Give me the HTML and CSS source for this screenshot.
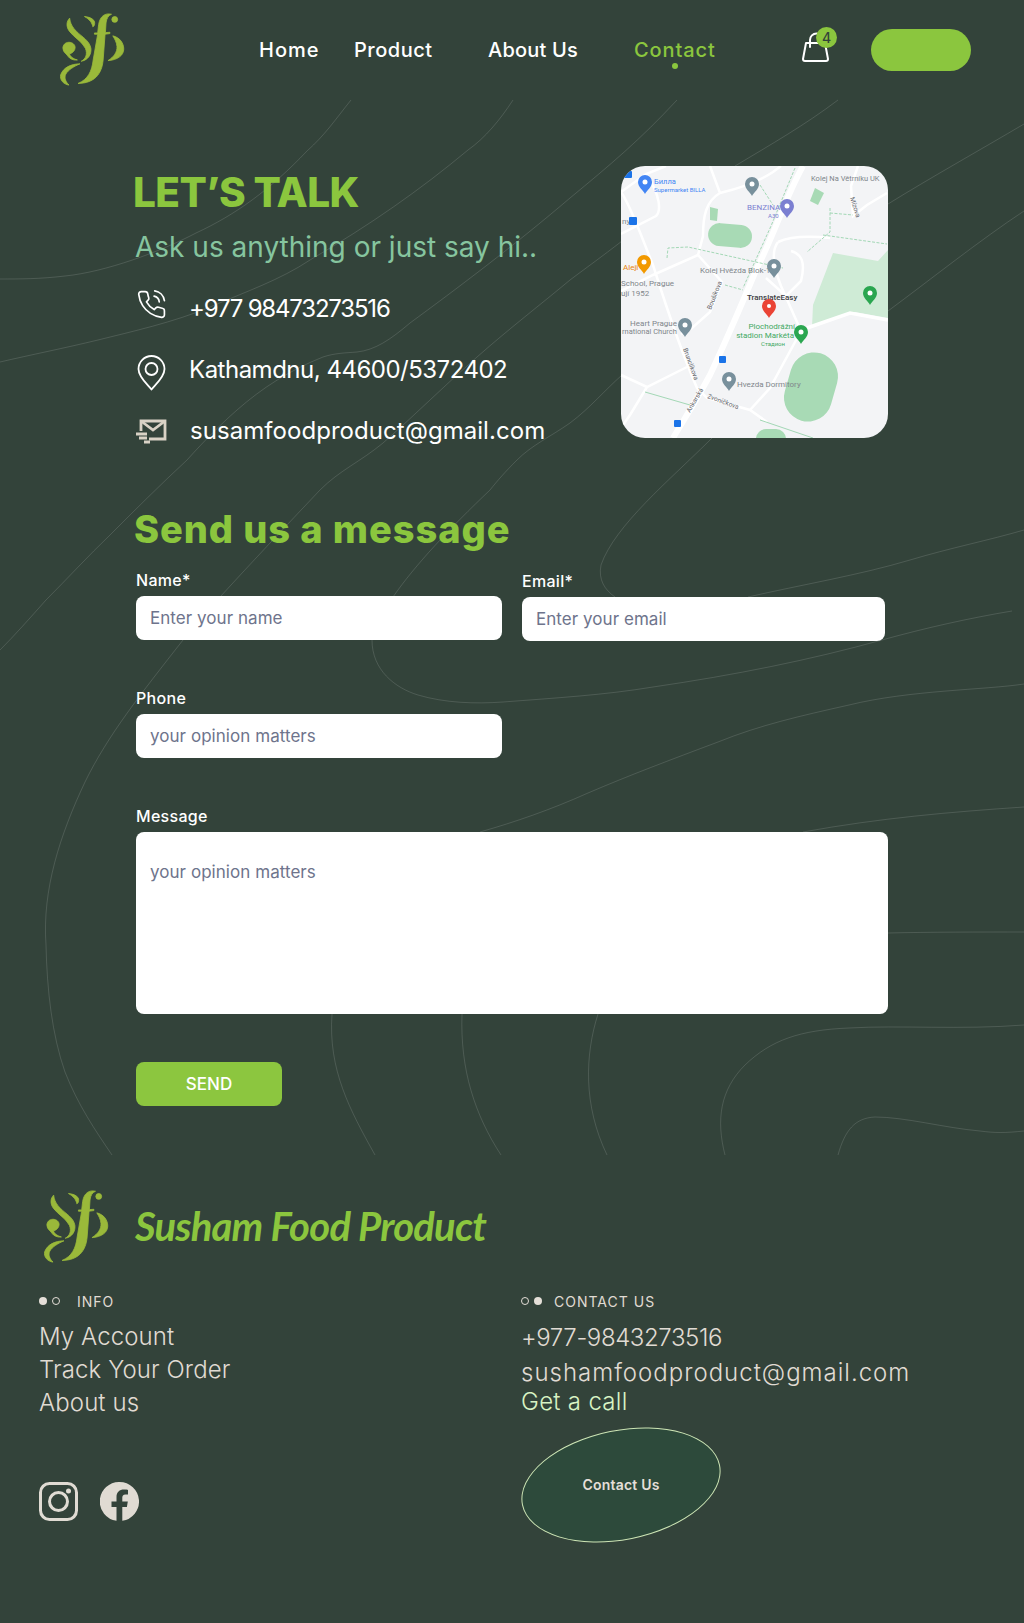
FILE: index.html
```html
<!DOCTYPE html>
<html lang="en">
<head>
<meta charset="utf-8">
<title>Contact - Susham Food Product</title>
<link rel="stylesheet" href="styles.css">
</head>
<body>
<div class="page">
  <svg class="contours" viewBox="0 0 1024 1623" width="1024" height="1623" aria-hidden="true">
    <path d="M351 100C335 120 325 135 307 151C270 190 235 215 196 233C160 252 105 272 65 276C40 279 20 279 0 279"/>
    <path d="M513 100C500 120 485 138 468 150C420 190 370 225 310 260C280 280 245 292 210 307C175 322 130 332 98 340C65 348 30 355 0 362"/>
    <path d="M677 100C640 140 610 165 570 198C515 245 455 290 410 323C390 340 375 350 357 352C345 353 335 353 323 357C290 370 262 388 237 410C220 425 205 440 187 460C160 485 135 510 110 535C88 556 68 578 46 600C30 618 15 635 0 650"/>
    <path d="M1024 124C980 150 930 178 888 204"/>
    <path d="M622 241C600 258 590 265 570 280C540 305 510 328 477 357C445 385 415 415 383 443C360 462 340 470 320 490C285 527 252 562 220 597C205 615 195 625 183 640C140 695 108 735 85 782C60 835 42 890 46 945C47 990 52 1035 65 1072C78 1105 95 1130 112 1155"/>
    <path d="M838 100C805 125 770 145 735 166"/>
    <path d="M622 375C605 390 590 408 570 423C550 437 532 445 517 460C505 472 498 480 490 490C450 528 415 565 393 597C380 615 372 625 372 640C372 670 395 688 418 695C445 703 475 704 503 702C555 698 605 695 653 687C735 675 810 660 882 640C925 628 970 618 1012 611"/>
    <path d="M1024 211C980 240 930 280 888 311"/>
    <path d="M712 438C670 480 615 525 601 565C598 580 605 590 615 597"/>
    <path d="M748 597C800 585 860 575 910 560C950 548 990 540 1024 530"/>
    <path d="M1024 684C985 690 910 690 849 705C800 716 760 725 718 742C670 760 630 775 588 793C550 810 515 822 480 832"/>
    <path d="M1024 807C950 812 880 818 803 832"/>
    <path d="M332 1014C328 1070 350 1110 375 1155"/>
    <path d="M462 1014C460 1070 475 1115 501 1155"/>
    <path d="M888 933C930 932 980 932 1024 932"/>
    <path d="M598 1014C585 1055 583 1105 607 1155"/>
    <path d="M1024 1025C960 1030 900 1025 849 1028C800 1030 771 1040 745 1065C720 1090 716 1120 725 1155"/>
    <path d="M1024 1131C1005 1133 995 1133 980 1131C945 1128 905 1117 875 1117C855 1118 845 1130 838 1155"/>
  </svg>

  <svg class="sprite" width="0" height="0" aria-hidden="true">
    <defs>
      <symbol id="sf-logo" viewBox="58 25 205 228">
        <path d="M88 40C78 50 76 66 88 82C102 100 126 112 137 134C144 152 138 166 124 174C146 170 156 152 154 134C150 110 126 98 110 82C96 68 90 56 88 40Z"/>
        <path d="M134 35C146 36 160 40 165 50C167 58 165 65 160 67C158 55 150 44 134 35Z"/>
        <path d="M86 115C74 115 67 124 67 133C67 147 80 152 84 160C88 166 100 172 112 170C98 166 88 158 88 151C98 148 105 140 105 131C105 122 96 115 86 115Z"/>
        <path d="M120 182C92 182 68 194 60 216C56 232 70 246 86 248C76 238 70 226 76 214C84 200 102 190 120 182Z"/>
        <path d="M218 28C198 23 182 34 178 60L175 86L165 86L165 90L175 90L161 170C157 205 145 230 114 243C165 242 188 214 192 170L198 90L213 88L213 84L199 85L201 55C203 40 208 32 218 28Z"/>
        <circle cx="228" cy="44" r="9"/>
        <path d="M222 95C244 100 256 118 256 136C256 155 238 170 207 172C226 160 236 145 235 128C234 115 228 105 222 95Z"/>
      </symbol>
      <path id="pin" d="M0 0C-2 -4 -7 -7 -7 -12A7 7 0 0 1 7 -12C7 -7 2 -4 0 0Z"/>
    </defs>
  </svg>

  <header class="topbar">
    <a class="logo-link" href="#"><svg class="logo" width="66" height="74"><use href="#sf-logo"/></svg></a>
    <a class="nav-link nav-home" href="#">Home</a>
    <a class="nav-link" href="#">Product</a>
    <a class="nav-link nav-about" href="#">About Us</a>
    <a class="nav-link is-active" href="#">Contact</a>
    <a class="cart" href="#">
      <svg width="28" height="30" viewBox="0 0 28 30" fill="none" stroke="#fff" stroke-width="2" stroke-linejoin="round" stroke-linecap="round">
        <path d="M4 11H23L26 27A2 2 0 0 1 24 29H3A2 2 0 0 1 1 27Z"/>
        <path d="M8 15V8A6.500 6.500 0 0 1 21 8V11"/>
      </svg>
      <span class="cart-badge">4</span>
    </a>
    <a class="pill" href="#" aria-label="Account"></a>
  </header>

  <main class="content">
    <section class="talk">
      <div class="talk-info">
        <h1 class="talk-title">LET’S TALK</h1>
        <p class="talk-sub">Ask us anything or just say hi..</p>
        <ul class="contact-list">
          <li class="contact-row">
            <svg class="icon icon-phone" width="31" height="31" viewBox="0 0 24 24" fill="none" stroke="#fff" stroke-width="1.300" stroke-linecap="round" stroke-linejoin="round">
              <path d="M22 16.920v3a2 2 0 0 1-2.180 2 19.790 19.790 0 0 1-8.630-3.070 19.500 19.500 0 0 1-6-6 19.790 19.790 0 0 1-3.070-8.670A2 2 0 0 1 4.110 2h3a2 2 0 0 1 2 1.720 12.840 12.840 0 0 0 .7 2.810 2 2 0 0 1-.45 2.110L8.090 9.910a16 16 0 0 0 6 6l1.270-1.270a2 2 0 0 1 2.110-.45 12.840 12.840 0 0 0 2.810.7A2 2 0 0 1 22 16.920z"/>
              <path d="M14 5.500A5 5 0 0 1 18 10M14.500 1.500A9 9 0 0 1 22 9"/>
            </svg>
            <span class="contact-phone">+977 98473273516</span>
          </li>
          <li class="contact-row">
            <svg class="icon icon-pin" width="29" height="36" viewBox="0 0 29 36" fill="none" stroke="#fff" stroke-width="1.800" stroke-linejoin="round">
              <path d="M14.500 34.500C10 29 1.500 22 1.500 14A13 13 0 0 1 27.500 14C27.500 22 19 29 14.500 34.500Z"/>
              <circle cx="14.500" cy="14" r="6"/>
            </svg>
            <span class="contact-address">Kathamdnu, 44600/5372402</span>
          </li>
          <li class="contact-row">
            <svg class="icon icon-mail" width="31" height="25" viewBox="0 0 31 25" fill="none" stroke="#d9d2c5" stroke-width="2.800">
              <path d="M5 12V2H29V20H13"/>
              <path d="M5 2L17 11L29 2"/>
              <path d="M0 15H11M3 19H11M8 23H14"/>
            </svg>
            <span class="contact-email">susamfoodproduct@gmail.com</span>
          </li>
        </ul>
      </div>
      <div class="map">
        <svg viewBox="0 0 267 272" width="267" height="272">
          <rect class="m-bg" width="267" height="272"/>
          <polygon class="m-pale" points="212,87 257,95 267,84 267,152 234,146 191,161 192,139"/>
          <polygon class="m-park" points="89,41 97,43 96,55 89,54"/>
          <polygon class="m-park" points="194,22 203,27 197,39 189,35"/>
          <rect class="m-park" x="87" y="58" width="44" height="23" rx="11.500" transform="rotate(5 109 70)"/>
          <rect class="m-park" x="166" y="186" width="48" height="70" rx="24" transform="rotate(16 190 221)"/>
          <rect class="m-park" x="135" y="263" width="30" height="20" rx="10"/>
          <g class="m-road">
            <path d="M0 26C10 40 22 75 32 99C45 140 62 190 76 222L86 232L129 244L146 256"/>
            <path d="M99 27L89 0M99 27C120 22 140 14 152 6L160 0M99 27C85 35 82 50 82 70L77 89L32 109L0 125"/>
            <path d="M77 89L101 116L89 146L71 162L60 168"/>
            <path d="M0 209L26 221L66 201M26 221L9 249L0 262"/>
            <path d="M157 76C150 85 152 100 160 120L180 165L149 222L129 244"/>
            <path d="M157 76C170 70 190 70 209 72M170 85C180 88 185 95 180 115L165 130L145 112"/>
            <path d="M266 27L246 39L232 50L230 20L237 0"/>
            <path d="M0 26L25 8L45 0M25 8C40 30 40 45 35 50L0 68"/>
          </g>
          <path class="m-road-wide" d="M182 0C165 30 155 65 136 102C120 140 105 175 89 209C75 235 62 255 52 272"/>
          <path class="m-road-mid" d="M186 162L229 147L267 154"/>
          <path class="m-dash" d="M174 2L150 60L122 122M139 19L152 39M209 42L209 66L186 86M209 47L232 49M202 69L266 78M46 92L47 82L67 81L162 102M104 119L122 124"/>
          <path class="m-trail" d="M24 226L69 239M139 254L192 272"/>
          <g class="m-labels">
            <text class="m-blue m-s" x="33" y="18">Билла</text>
            <text class="m-blue m-xs" x="33" y="26">Supermarket BILLA</text>
            <text class="m-purple" x="126" y="44">BENZINA</text>
            <text class="m-purple m-xs" x="147" y="52">A30</text>
            <text class="m-grey m-narrow" x="190" y="15">Kolej Na Větrníku UK</text>
            <text class="m-grey" x="79" y="107">Kolej Hvězda Blok-1</text>
            <text class="m-dark" x="126" y="134">TranslateEasy</text>
            <text class="m-green" x="174" y="163" text-anchor="end">Plochodrážní</text>
            <text class="m-green" x="173" y="172" text-anchor="end">stadion Markéta</text>
            <text class="m-green m-xs" x="164" y="180" text-anchor="end">Стадион</text>
            <text class="m-orange" x="2" y="104">Aleji</text>
            <text class="m-grey" x="0" y="120">School, Prague</text>
            <text class="m-grey" x="0" y="130">ují 1952</text>
            <text class="m-grey" x="56" y="160" text-anchor="end">Heart Prague</text>
            <text class="m-grey m-narrow" x="1" y="168">rnational Church</text>
            <text class="m-grey" x="116" y="221">Hvezda Dormitory</text>
            <text class="m-grey" x="1" y="58">ny</text>
            <text class="m-road-name" transform="translate(90 144) rotate(-68)">Boušíkova</text>
            <text class="m-road-name" transform="translate(62 183) rotate(70)">Brunclíkova</text>
            <text class="m-road-name" transform="translate(69 247) rotate(-60)">Ankarská</text>
            <text class="m-road-name" transform="translate(86 232) rotate(20)">Zvoníčkova</text>
            <text class="m-road-name" transform="translate(229 32) rotate(72)">Mízova</text>
          </g>
          <g class="m-pin-grey">
            <use href="#pin" x="131" y="30"/>
            <use href="#pin" x="153" y="112"/>
            <use href="#pin" x="64" y="171"/>
            <use href="#pin" x="108" y="225"/>
          </g>
          <use class="m-pin-blue" href="#pin" x="24" y="28"/>
          <use class="m-pin-purple" href="#pin" x="166" y="52"/>
          <use class="m-pin-orange" href="#pin" x="23" y="108"/>
          <use class="m-pin-red" href="#pin" x="148" y="152"/>
          <use class="m-pin-green" href="#pin" x="180" y="178"/>
          <use class="m-pin-green" href="#pin" x="249" y="139"/>
          <g class="m-pin-dots">
            <circle cx="131" cy="18" r="2.500"/><circle cx="166" cy="40" r="2.500"/><circle cx="24" cy="16" r="2.500"/><circle cx="23" cy="96" r="2.500"/>
            <circle cx="153" cy="100" r="2.500"/><circle cx="148" cy="140" r="2"/><circle cx="180" cy="166" r="2.500"/><circle cx="64" cy="159" r="2.500"/>
            <circle cx="108" cy="213" r="2.500"/><circle cx="249" cy="127" r="2.500"/>
          </g>
          <g class="m-stops">
            <rect x="8" y="51" width="8" height="8" rx="1"/><rect x="98" y="190" width="7" height="7" rx="1"/>
            <rect x="53" y="254" width="7" height="7" rx="1"/><rect x="1" y="5" width="10" height="7" rx="1"/>
          </g>
        </svg>
      </div>
    </section>

    <section class="message">
      <h2 class="message-title">Send us a message</h2>
      <form class="form">
        <div class="field">
          <label class="field-label" for="f-name">Name*</label>
          <input class="field-input" id="f-name" type="text" placeholder="Enter your name">
        </div>
        <div class="field field-email">
          <label class="field-label" for="f-email">Email*</label>
          <input class="field-input" id="f-email" type="email" placeholder="Enter your email">
        </div>
        <div class="field field-phone">
          <label class="field-label" for="f-phone">Phone</label>
          <input class="field-input" id="f-phone" type="text" placeholder="your opinion matters">
        </div>
        <div class="field field-message">
          <label class="field-label" for="f-message">Message</label>
          <textarea class="field-input field-area" id="f-message" placeholder="your opinion matters"></textarea>
        </div>
        <button class="send" type="button">SEND</button>
      </form>
    </section>
  </main>

  <footer class="footer">
    <div class="brand">
      <svg class="logo" width="66" height="74"><use href="#sf-logo"/></svg>
      <span class="brand-name">Susham Food Product</span>
    </div>
    <div class="footer-cols">
      <div class="footer-col">
        <h3 class="footer-head"><span class="dot dot-fill"></span><span class="dot dot-ring"></span><span class="footer-head-text">INFO</span></h3>
        <a class="footer-link" href="#">My Account</a>
        <a class="footer-link" href="#">Track Your Order</a>
        <a class="footer-link" href="#">About us</a>
        <div class="socials">
          <svg width="39" height="39" viewBox="0 0 39 39" fill="none" stroke="#e0dbd3" stroke-width="3">
            <rect x="1.500" y="1.500" width="36" height="36" rx="9"/>
            <circle cx="19.500" cy="19.500" r="9"/>
            <circle class="ig-dot" cx="29.500" cy="9" r="2.500"/>
          </svg>
          <svg width="39" height="39" viewBox="0 0 39 39">
            <path class="fb-mark" d="M19.500 0A19.500 19.500 0 0 0 16.500 38.800V25H11.500V19.500H16.500V15C16.500 10 19.500 7.500 24 7.500C26 7.500 27.500 7.800 28 7.900V12.500H25.500C23 12.500 22.300 14 22.300 15.500V19.500H27.800L26.900 25H22.300V38.800A19.500 19.500 0 0 0 19.500 0Z"/>
          </svg>
        </div>
      </div>
      <div class="footer-col">
        <h3 class="footer-head footer-head-contact"><span class="dot dot-ring"></span><span class="dot dot-fill"></span><span class="footer-head-text">CONTACT US</span></h3>
        <a class="footer-link footer-phone" href="#">+977-9843273516</a>
        <a class="footer-link footer-mail" href="#">sushamfoodproduct@gmail.com</a>
        <a class="footer-link footer-call" href="#">Get a call</a>
        <a class="blob" href="#"><span class="blob-text">Contact Us</span></a>
      </div>
    </div>
  </footer>
</div>
</body>
</html>
```

FILE: styles.css
```css
* { box-sizing: border-box; }

html, body { margin: 0; padding: 0; }

body {
  background: #33433a;
  font-family: Inter, "Noto Sans", sans-serif;
  color: #fff;
}

a { color: inherit; text-decoration: none; }

.page {
  position: relative;
  width: 1024px;
  height: 1623px;
  overflow: hidden;
  background: #33433a;
}

.contours {
  position: absolute;
  top: 0;
  left: 0;
  fill: none;
  stroke: rgba(255, 255, 255, 0.13);
  stroke-width: 1;
}

.sprite { position: absolute; }

.logo {
  display: block;
  fill: #9ab93a;
  stroke: #9ab93a;
  stroke-width: 2.500;
}

/* Top bar */
.topbar {
  position: relative;
  display: grid;
  grid-template-columns: 199px 95px 134px 146px 168px 69px 100px;
  align-items: center;
  height: 100px;
  padding-left: 60px;
}

.nav-link {
  font-size: 20px;
  font-weight: 500;
  line-height: 28px;
  letter-spacing: 0.5px;
  white-space: nowrap;
}

.nav-home { letter-spacing: 1px; }
.nav-about { letter-spacing: 0.2px; }

.nav-link.is-active {
  position: relative;
  justify-self: start;
  width: 81px;
  color: #8bc63e;
  letter-spacing: 0.9px;
}

.nav-link.is-active::after {
  content: "";
  position: absolute;
  left: 38px;
  top: 27px;
  width: 6px;
  height: 6px;
  border-radius: 50%;
  background: #8bc63e;
}

.cart {
  position: relative;
  display: block;
  width: 28px;
  height: 30px;
  margin-top: -6px;
}

.cart svg { display: block; }

.cart-badge {
  position: absolute;
  left: 14px;
  top: -5px;
  width: 21px;
  height: 21px;
  border-radius: 50%;
  background: #8bc63e;
  color: #33433a;
  font-size: 14px;
  font-weight: 500;
  line-height: 21px;
  text-align: center;
}

.pill {
  display: block;
  width: 100px;
  height: 42px;
  border-radius: 21px;
  background: #8bc63e;
}

/* Main */
.content {
  position: relative;
  padding-left: 136px;
}

.talk {
  display: grid;
  grid-template-columns: 485px 267px;
  padding-top: 66px;
  width: 752px;
}

.talk-title {
  margin: 2px 0 -1px -3px;
  font-size: 40.500px;
  font-weight: 800;
  line-height: 50px;
  color: #8bc63e;
  letter-spacing: -0.600px;
  white-space: nowrap;
}

.talk-sub {
  margin: 12px 0 0 -1px;
  font-size: 28px;
  font-weight: 400;
  line-height: 36px;
  color: #86c59f;
  white-space: nowrap;
}

.contact-list {
  list-style: none;
  margin: 13px 0 0;
  padding: 0;
}

.contact-row {
  display: flex;
  align-items: center;
  height: 61px;
  font-size: 24px;
  line-height: 30px;
  white-space: nowrap;
}

.contact-phone { letter-spacing: -1.200px; margin-left: -1px; }
.contact-address { letter-spacing: -0.500px; margin-left: -2px; }
.contact-email { letter-spacing: 0.050px; }

.icon { flex: none; display: block; }

.icon-phone { margin: -8px 23px 0 0; }
.icon-pin { margin: 6px 25px 0 1px; }
.icon-mail { margin: 2px 23px 0 0; }

.map {
  width: 267px;
  height: 272px;
  border-radius: 24px;
  overflow: hidden;
}

.map svg { display: block; }

.m-bg { fill: #f3f4f6; }
.m-pale { fill: #cfebd6; }
.m-park { fill: #a8dab5; }
.m-road { fill: none; stroke: #fff; stroke-width: 2.500; }
.m-road-wide { fill: none; stroke: #fff; stroke-width: 6; }
.m-road-mid { fill: none; stroke: #fff; stroke-width: 3.500; }
.m-dash { fill: none; stroke: #9ad4ae; stroke-width: 0.900; stroke-dasharray: 3 1.500; }
.m-trail { fill: none; stroke: #9ad4ae; stroke-width: 0.900; }

.m-labels text { font-family: Roboto, sans-serif; font-size: 8px; }
.m-labels .m-s { font-size: 7.500px; }
.m-labels .m-xs { font-size: 6px; }
.m-labels .m-narrow { font-size: 7.500px; }
.m-blue { fill: #4285f4; }
.m-purple { fill: #7b7fd1; }
.m-grey { fill: #80868b; }
.m-dark { fill: #3c4043; font-weight: 500; }
.m-green { fill: #3fa963; }
.m-orange { fill: #e8830c; }
.m-labels .m-road-name { fill: #5f6368; font-size: 6.500px; }

.m-pin-grey { fill: #78909c; }
.m-pin-blue { fill: #4285f4; }
.m-pin-purple { fill: #7b7fd1; }
.m-pin-orange { fill: #f29900; }
.m-pin-red { fill: #ea4335; }
.m-pin-green { fill: #2aa650; }
.m-pin-dots { fill: #fff; }
.m-stops { fill: #1a73e8; }

/* Form */
.message-title {
  margin: 45px 0 0 -2px;
  font-size: 38px;
  font-weight: 800;
  line-height: 46px;
  color: #8bc63e;
  letter-spacing: 0.930px;
}

.form {
  display: grid;
  grid-template-columns: 366px 386px;
  row-gap: 46px;
  margin-top: 16px;
  width: 752px;
}

.field { display: flex; flex-direction: column; }

.field-email {
  grid-column: 2;
  padding: 0 3px 0 20px;
  margin: 1px 0 -1px;
}

.field-phone { grid-column: 1; }

.field-message { grid-column: 1 / span 2; }

.field-label {
  font-size: 16px;
  font-weight: 500;
  line-height: 24px;
  letter-spacing: 0.300px;
  margin-bottom: 4px;
}

.field-input {
  display: block;
  width: 100%;
  height: 44px;
  padding: 0 14px;
  border: 0;
  border-radius: 8px;
  background: #fff;
  font-family: inherit;
  font-size: 17px;
  letter-spacing: 0.050px;
  color: #333;
  outline: 0;
}

.field-input::placeholder { color: #6e748c; opacity: 1; }

.field-area {
  height: 182px;
  padding-top: 28px;
  resize: none;
  line-height: 24px;
}

.send {
  grid-column: 1;
  width: 146px;
  height: 44px;
  margin-top: 2px;
  border: 0;
  border-radius: 8px;
  background: #8cc63f;
  color: #fff;
  font-family: inherit;
  font-size: 17px;
  font-weight: 500;
}

/* Footer */
.footer {
  position: relative;
  padding: 84px 0 0 39px;
}

.brand {
  display: flex;
  align-items: center;
  padding-left: 5px;
}

.brand-name {
  margin: -2px 0 0 25px;
  font-family: Lato, sans-serif;
  font-size: 40px;
  font-style: italic;
  font-weight: 700;
  line-height: 60px;
  color: #8bc63e;
  letter-spacing: -0.800px;
  white-space: nowrap;
}

.footer-cols {
  display: grid;
  grid-template-columns: 482px 1fr;
  margin-top: 27px;
}

.footer-col { display: flex; flex-direction: column; align-items: flex-start; }

.footer-head {
  display: flex;
  align-items: center;
  height: 20px;
  margin: 0 0 9px;
  font-size: 14px;
  font-weight: 400;
  letter-spacing: 1px;
  color: #e0dbd3;
}

.dot {
  display: block;
  border-radius: 50%;
  margin-right: 5px;
}

.dot-fill { width: 8px; height: 8px; background: #e5dfd8; }
.dot-ring { width: 8px; height: 8px; border: 1px solid #e5dfd8; }

.footer-head-text { margin-left: 12px; }

.footer-head-contact { margin-bottom: 10px; }
.footer-head-contact .footer-head-text { margin-left: 7px; }

.footer-link {
  font-size: 24px;
  font-weight: 300;
  line-height: 33px;
  letter-spacing: 0.100px;
  color: #e0dbd3;
  white-space: nowrap;
}

.footer-phone { letter-spacing: -0.400px; }

.footer-mail {
  margin-top: 2px;
  letter-spacing: 1px;
}

.footer-call {
  margin-top: -4px;
  letter-spacing: 0.300px;
  color: #d8f3c4;
}

.socials {
  display: flex;
  gap: 22px;
  margin-top: 63px;
}

.socials svg { display: block; }

.ig-dot { fill: #e0dbd3; stroke: none; }
.fb-mark { fill: #e0dbd3; }

.blob {
  position: relative;
  display: flex;
  align-items: center;
  justify-content: center;
  width: 200px;
  height: 116px;
  margin-top: 8px;
}

.blob::before {
  content: "";
  position: absolute;
  left: -1px;
  top: 4px;
  width: 200px;
  height: 108px;
  border-radius: 50%;
  border: 1px solid #cde5b5;
  background: #2d4a3b;
  transform: rotate(-11.400deg);
}

.blob-text {
  position: relative;
  font-size: 14px;
  font-weight: 600;
  letter-spacing: 0.200px;
  color: #e5dfd8;
}
```
